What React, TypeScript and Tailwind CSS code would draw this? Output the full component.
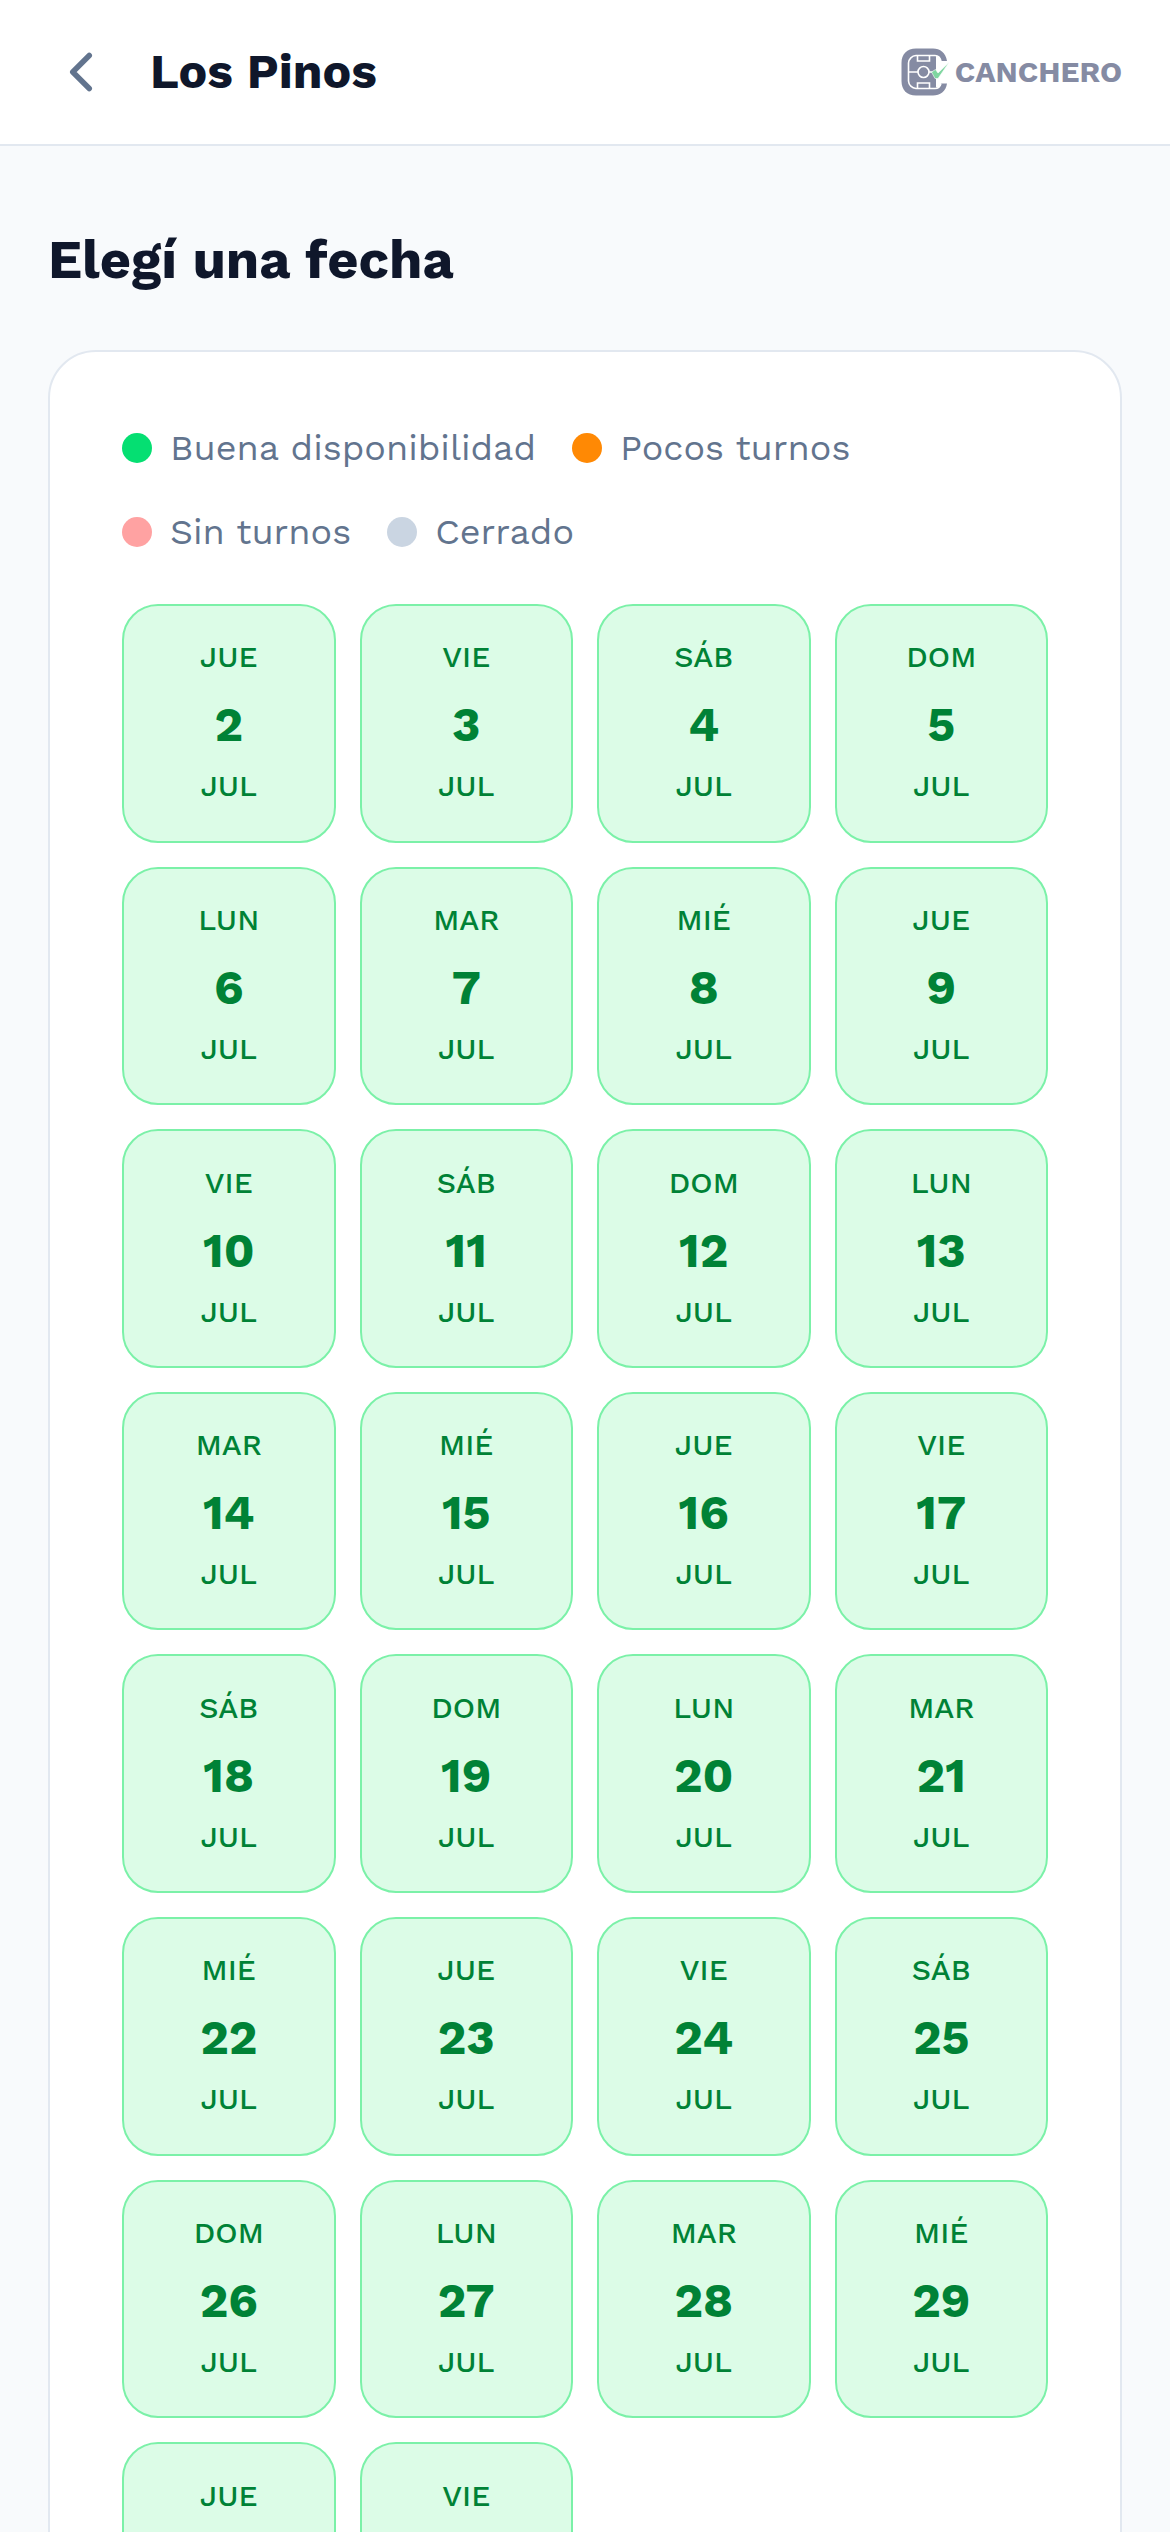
import { ChevronLeft } from "lucide-react";

const legend = [
  { label: "Buena disponibilidad", dot: "bg-[#05df72]" },
  { label: "Pocos turnos", dot: "bg-[#ff8904]" },
  { label: "Sin turnos", dot: "bg-[#ffa2a2]" },
  { label: "Cerrado", dot: "bg-[#cad5e2]" },
];

const weekdays = ["JUE", "VIE", "SÁB", "DOM", "LUN", "MAR", "MIÉ"];

// 2 de julio cae jueves
const days = Array.from({ length: 30 }, (_, i) => ({
  weekday: weekdays[i % 7],
  day: i + 2,
  month: "JUL",
}));

function Logo() {
  return (
    <a href="#" aria-label="Canchero" className="flex items-center gap-1.5 text-[#858ba3]">
      <svg viewBox="0 0 48 48" className="size-12" fill="none" aria-hidden="true">
        <path
          d="M46 13C45 5 39 .5 32 .5H15C6 .5.5 6 .5 15v18C.5 42 6 47.500 15 47.500h17c7 0 13-4 14-12h-6c-1 3-3 4-5 4H14V8h21c3 0 4 2 5 5z"
          fill="currentColor"
        />
        <rect x="8" y="8" width="27" height="32" fill="currentColor" />
        <path
          d="M40 13c-1-4-3-5.500-6-5.500H15A8 8 0 0 0 7.500 15v18a8 8 0 0 0 7.500 7.500h19c3 0 5-1.500 6-5M7.500 24H17M28 24h4M16.500 8v5h12V8M16.500 40v-5h12v5"
          stroke="white"
          strokeWidth="1.600"
        />
        <path d="M35 9h3l1 5v20l-1 5h-3z" fill="white" />
        <circle cx="22.500" cy="24" r="5.500" stroke="white" strokeWidth="1.600" />
        <path
          d="M30.500 24l4-2.500 2.500 3.500L48 14.500 37 30.500h-3z"
          fill="#7fd6a0"
          stroke="white"
          strokeWidth=".6"
        />
      </svg>
      <span className="text-[30px] leading-none font-bold">CANCHERO</span>
    </a>
  );
}

export default function App() {
  return (
    <div className="min-h-screen bg-slate-50 font-['Work_Sans',Inter,sans-serif] text-slate-900">
      <header className="flex items-center justify-between border-b-2 border-slate-200 bg-white px-12 py-9">
        <div className="flex items-center gap-9">
          <button type="button" aria-label="Volver" className="text-[#62748e]">
            <ChevronLeft size={66} />
          </button>
          <h1 className="text-[48px] leading-[72px] font-bold">Los Pinos</h1>
        </div>
        <Logo />
      </header>

      <main className="px-12 pt-18">
        <h2 className="text-[54px] leading-[84px] font-bold">Elegí una fecha</h2>

        <section className="mt-12 rounded-[48px] border-2 border-slate-200 bg-white p-18">
          <ul className="flex flex-wrap gap-9 text-[36px] leading-[48px] text-[#62748e]">
            {legend.map(({ label, dot }) => (
              <li key={label} className="flex items-center gap-4.5">
                <span className={`size-[30px] rounded-full ${dot}`} />
                {label}
              </li>
            ))}
          </ul>

          <div className="mt-12 grid grid-cols-4 gap-6">
            {days.map(({ weekday, day, month }) => (
              <button
                key={day}
                type="button"
                className="flex aspect-[17/19] flex-col items-center justify-center rounded-[36px] border-2 border-[#7bf1a8] bg-[#dcfce7] pb-1 text-[#008236]"
              >
                <span className="text-[30px] leading-[45px] font-medium">{weekday}</span>
                <span className="mt-4 text-[48px] leading-[60px] font-bold">{day}</span>
                <span className="mt-2 text-[30px] leading-[45px] font-medium">{month}</span>
              </button>
            ))}
          </div>
        </section>
      </main>
    </div>
  );
}
